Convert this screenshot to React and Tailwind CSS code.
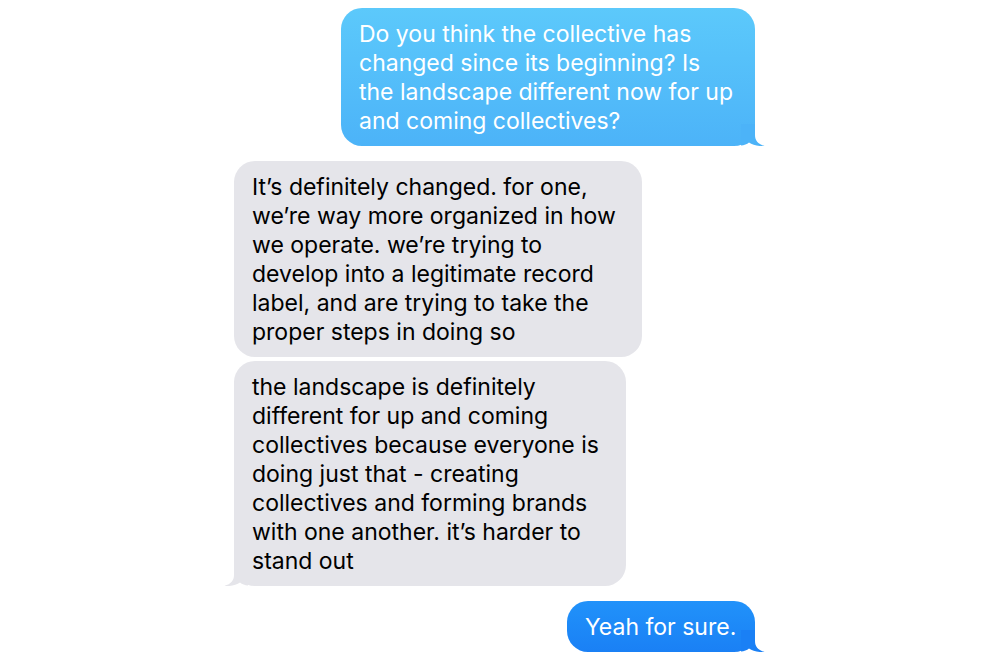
const Tail = ({ side, color }) => {
  if (side === "right") {
    return (
      <svg className="absolute bottom-0 -right-[10px]" width="24" height="22" viewBox="0 0 24 22">
        <path d="M0 0 L14 0 L14 11 C14 16.5 17 20 23.5 21.8 C17 22.6 11.5 21.2 8 18.6 C6 20.4 3 21.4 0 21.6 Z" fill={color} />
      </svg>
    )
  }
  return (
    <svg className="absolute bottom-0 -left-[10px]" width="24" height="22" viewBox="0 0 24 22">
      <path d="M24 0 L10 0 L10 11 C10 16.5 7 20 0.5 21.8 C7 22.6 12.5 21.2 16 18.6 C18 20.4 21 21.4 24 21.6 Z" fill={color} />
    </svg>
  )
}

const Bubble = ({ lines, side, tail, variant, width }) => {
  const styles = {
    sky: "bg-gradient-to-b from-[#5cc9fb] to-[#4cb3f8] text-white",
    blue: "bg-gradient-to-b from-[#2192fa] to-[#1a80f5] text-white",
    gray: "bg-[#e5e5ea] text-black",
  }
  const tailColor = { sky: "#4cb3f8", blue: "#1a80f5", gray: "#e5e5ea" }[variant]
  return (
    <div className={`relative rounded-[21px] pl-[18px] pr-[14px] pt-[12px] pb-[10px] ${styles[variant]} ${width}`}>
      {lines.map((l, i) => (
        <div key={i} className="whitespace-nowrap">{l}</div>
      ))}
      {tail && <Tail side={side} color={tailColor} />}
    </div>
  )
}

export default function App() {
  return (
    <div
      className="w-[990px] h-[660px] bg-white overflow-hidden text-[23px] leading-[29px]"
      style={{ fontFamily: "Inter, 'Liberation Sans', sans-serif" }}
    >
      <div className="ml-[234px] w-[521px] pt-[8px] flex flex-col">
        <div className="self-end">
          <Bubble
            variant="sky"
            side="right"
            tail
            width="w-[414px]"
            lines={[
              "Do you think the collective has",
              "changed since its beginning? Is",
              "the landscape different now for up",
              "and coming collectives?",
            ]}
          />
        </div>
        <div className="self-start mt-[15px]">
          <Bubble
            variant="gray"
            side="left"
            width="w-[408px]"
            lines={[
              "It’s definitely changed. for one,",
              "we’re way more organized in how",
              "we operate. we’re trying to",
              "develop into a legitimate record",
              "label, and are trying to take the",
              "proper steps in doing so",
            ]}
          />
        </div>
        <div className="self-start mt-[4px]">
          <Bubble
            variant="gray"
            side="left"
            tail
            width="w-[392px]"
            lines={[
              "the landscape is definitely",
              "different for up and coming",
              "collectives because everyone is",
              "doing just that - creating",
              "collectives and forming brands",
              "with one another. it’s harder to",
              "stand out",
            ]}
          />
        </div>
        <div className="self-end mt-[15px]">
          <Bubble variant="blue" side="right" tail width="w-[188px]" lines={["Yeah for sure."]} />
        </div>
      </div>
    </div>
  )
}
